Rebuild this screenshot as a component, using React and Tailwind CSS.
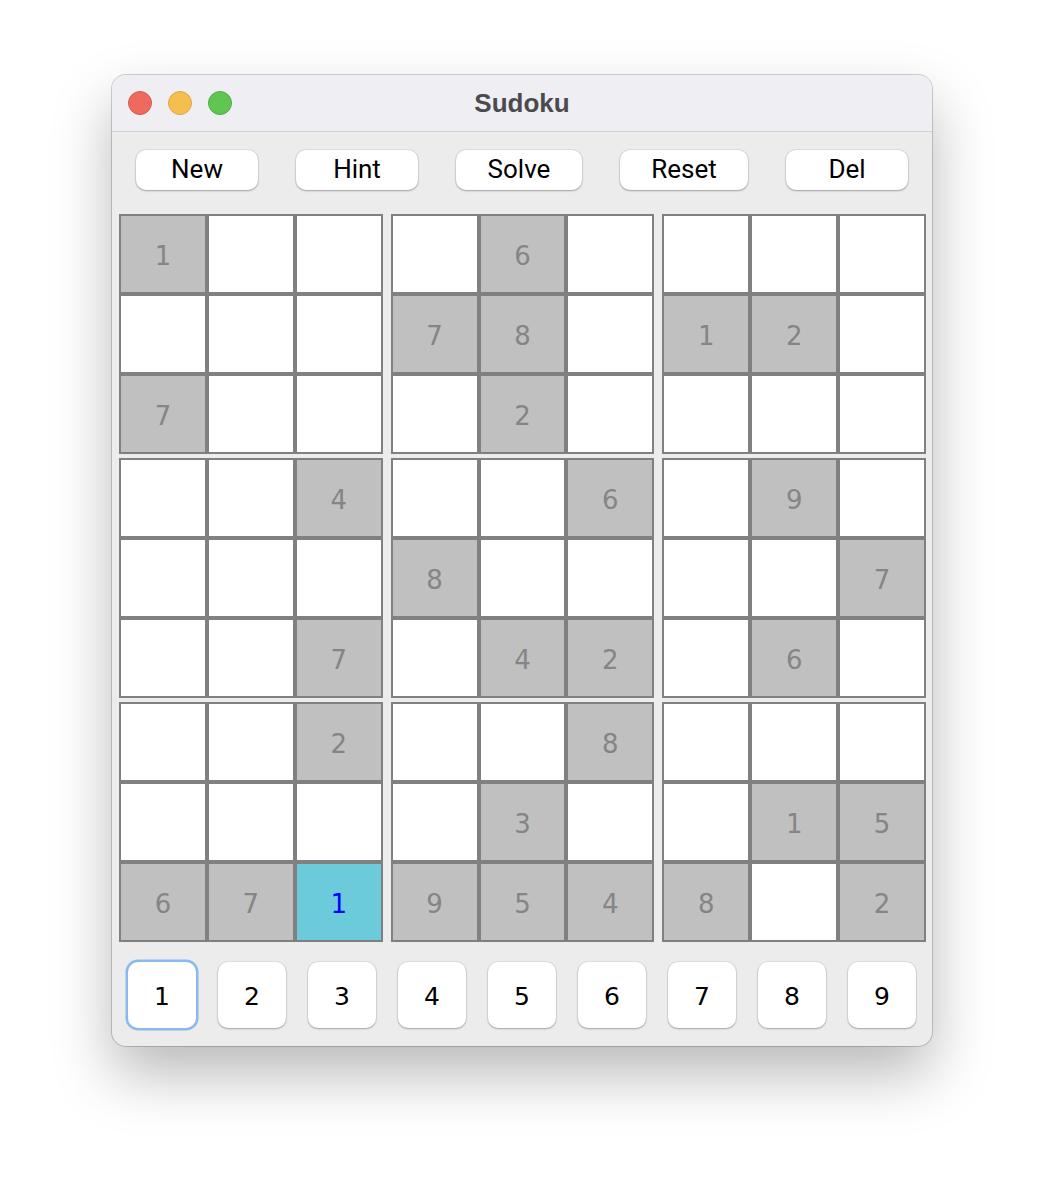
import React from "react";

const grid = [
  [1, 0, 0, 0, 6, 0, 0, 0, 0],
  [0, 0, 0, 7, 8, 0, 1, 2, 0],
  [7, 0, 0, 0, 2, 0, 0, 0, 0],
  [0, 0, 4, 0, 0, 6, 0, 9, 0],
  [0, 0, 0, 8, 0, 0, 0, 0, 7],
  [0, 0, 7, 0, 4, 2, 0, 6, 0],
  [0, 0, 2, 0, 0, 8, 0, 0, 0],
  [0, 0, 0, 0, 3, 0, 0, 1, 5],
  [6, 7, 1, 9, 5, 4, 8, 0, 2],
];

const topButtons = [
  { label: "New", w: "w-[122px]" },
  { label: "Hint", w: "w-[122px]" },
  { label: "Solve", w: "w-[126px]" },
  { label: "Reset", w: "w-[128px]" },
  { label: "Del", w: "w-[122px]" },
];

function Cell({ r, c }) {
  const v = grid[r][c];
  const selected = r === 8 && c === 2;
  let cls = "bg-white";
  let txt = "text-[#858585]";
  if (selected) {
    cls = "bg-[#6ccbdb]";
    txt = "text-[#0000ff]";
  } else if (v) {
    cls = "bg-[#c0c0c0]";
  }
  return (
    <div
      className={`${cls} border-2 border-[#808080] flex items-center justify-center pt-[3px] text-[26px] leading-none ${txt}`}
      style={{ fontFamily: '"DejaVu Sans", sans-serif' }}
    >
      {v ? v : ""}
    </div>
  );
}

function Box({ br, bc }) {
  const cells = [];
  for (let i = 0; i < 3; i++) {
    for (let j = 0; j < 3; j++) {
      cells.push(<Cell key={`${i}-${j}`} r={br * 3 + i} c={bc * 3 + j} />);
    }
  }
  return <div className="grid grid-cols-3 grid-rows-3 h-[240px]">{cells}</div>;
}

export default function App() {
  return (
    <div className="min-h-[1194px] bg-white flex justify-center pt-[75px]">
      <div className="w-[820px] h-[971px] rounded-[14px] bg-[#ececec] overflow-hidden flex flex-col shadow-[0_0_0_1px_rgba(0,0,0,0.18),0_28px_60px_rgba(0,0,0,0.28)]">
        {/* title bar */}
        <div className="h-[57px] shrink-0 bg-[#efeef3] border-b border-[#d2d1d6] grid grid-cols-[1fr_auto_1fr] items-center">
          <div className="flex items-center gap-[16px] pl-[16px]">
            <div className="w-[24px] h-[24px] rounded-full bg-[#ee6a5f] border border-[#d9594f]" />
            <div className="w-[24px] h-[24px] rounded-full bg-[#f5bf4f] border border-[#dfa83c]" />
            <div className="w-[24px] h-[24px] rounded-full bg-[#61c554] border border-[#50ad45]" />
          </div>
          <div
            className="text-[26px] font-bold text-[#4b4b4d] leading-none"
            style={{ fontFamily: '"Liberation Sans", Arial, sans-serif' }}
          >
            Sudoku
          </div>
          <div />
        </div>

        {/* toolbar */}
        <div className="mt-[18px] flex justify-center gap-[38px]">
          {topButtons.map((b) => (
            <div
              key={b.label}
              className={`${b.w} h-[40px] bg-white rounded-[10px] flex items-center justify-center pb-[2px] text-[26px] text-black leading-none shadow-[0_0_0_1px_rgba(0,0,0,0.06),0_1px_2px_rgba(0,0,0,0.28)]`}
              style={{ fontFamily: 'Roboto, "Liberation Sans", sans-serif' }}
            >
              {b.label}
            </div>
          ))}
        </div>

        {/* board */}
        <div className="mt-[24px] ml-[7px] w-[807px] grid grid-cols-3 gap-x-[8px] gap-y-[4px]">
          {[0, 1, 2].map((br) =>
            [0, 1, 2].map((bc) => <Box key={`${br}-${bc}`} br={br} bc={bc} />)
          )}
        </div>

        {/* number pad */}
        <div className="mt-[20px] flex justify-center gap-[22px]">
          {[1, 2, 3, 4, 5, 6, 7, 8, 9].map((n) => (
            <div
              key={n}
              className={`w-[68px] h-[66px] bg-white rounded-[10px] flex items-center justify-center pt-[3px] text-[25px] text-black leading-none ${
                n === 1
                  ? "shadow-[0_0_0_2.5px_#8bb9ef]"
                  : "shadow-[0_0_0_1px_rgba(0,0,0,0.05),0_1px_2px_rgba(0,0,0,0.28)]"
              }`}
              style={{ fontFamily: '"DejaVu Sans", sans-serif' }}
            >
              {n}
            </div>
          ))}
        </div>
      </div>
    </div>
  );
}
